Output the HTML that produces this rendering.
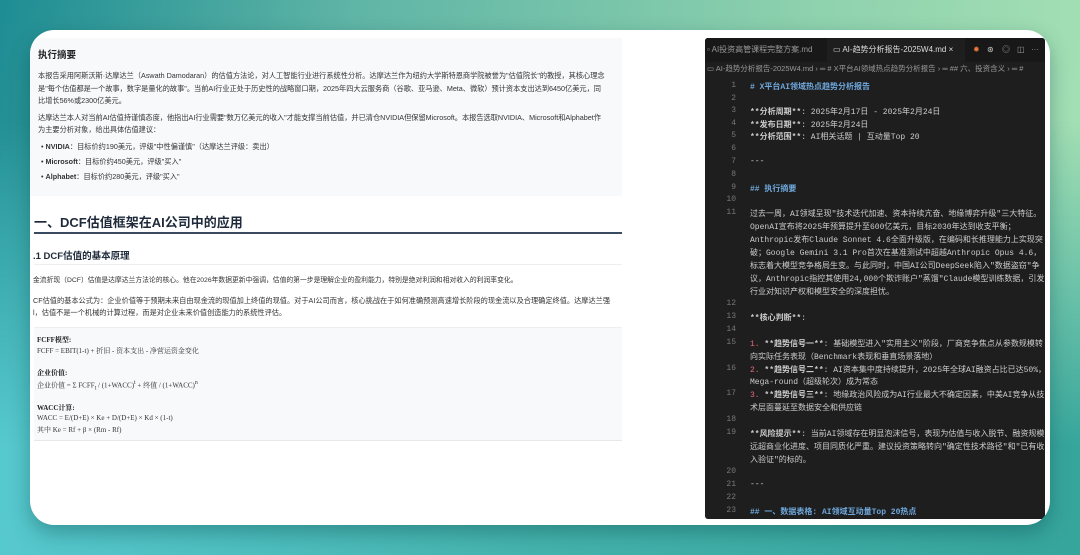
<!DOCTYPE html>
<html><head><meta charset="utf-8"><style>
*{margin:0;padding:0;box-sizing:border-box}
body{width:1080px;height:555px;overflow:hidden;position:relative;font-family:"Liberation Sans","Noto Sans CJK SC",sans-serif;
background:linear-gradient(100deg,#1e8d94 0%,#5fb5a6 30%,#8fd2ae 70%,#a9e3b6 100%);}
.bot{position:absolute;left:0;top:120px;width:1080px;height:435px;background:linear-gradient(90deg,#56c9cf 0%,#45b3ad 50%,#36a59c 100%);-webkit-mask-image:linear-gradient(to bottom,transparent 0%,black 75%);mask-image:linear-gradient(to bottom,transparent 0%,black 75%)}
.card{position:absolute;left:30px;top:30px;width:1020px;height:495px;background:#fff;border-radius:24px;overflow:hidden;box-shadow:0 8px 20px rgba(0,60,60,.35)}
.sum{position:absolute;left:0;top:8px;width:592px;height:158px;background:#f7f9fb}
.l{position:absolute;color:#333;font-size:7.2px;white-space:nowrap}
.h{font-weight:bold;color:#222}
.ed{position:absolute;left:675px;top:8px;width:340px;height:481px;background:#1e1e1f;border-radius:3px;overflow:hidden;font-family:"Liberation Mono","Noto Sans CJK SC",monospace}
.tabs{position:absolute;left:0;top:0;width:340px;height:24px;background:#181818}
.tab{position:absolute;top:0;height:24px;line-height:24px;font-size:8px;color:#999;font-family:"Liberation Sans","Noto Sans CJK SC",sans-serif;white-space:nowrap}
.bc{position:absolute;left:0;top:24px;height:14px;line-height:14px;font-size:7.5px;color:#999;font-family:"Liberation Sans","Noto Sans CJK SC",sans-serif;white-space:nowrap;padding-left:2px}
.n{position:absolute;left:0;width:31px;text-align:right;font-size:8px;color:#777}
.c{position:absolute;left:45px;font-size:8px;color:#ccc;white-space:nowrap}
.b{color:#6fa8dc;font-weight:bold}
.r{color:#e06c75}
</style></head><body>
<div class="bot"></div>
<div class="card">
<div class="sum"></div>
<div class="l h" style="left:8px;top:17px;font-size:9.5px">执行摘要</div>
<div class="l" style="left:8px;top:41px">本报告采用阿斯沃斯·达摩达兰（Aswath Damodaran）的估值方法论，对人工智能行业进行系统性分析。达摩达兰作为纽约大学斯特恩商学院被誉为"估值院长"的教授，其核心理念</div>
<div class="l" style="left:8px;top:54px">是"每个估值都是一个故事，数字是量化的故事"。当前AI行业正处于历史性的战略窗口期，2025年四大云服务商（谷歌、亚马逊、Meta、微软）预计资本支出达到6450亿美元，同</div>
<div class="l" style="left:8px;top:66px">比增长56%或2300亿美元。</div>
<div class="l" style="left:8px;top:83px">达摩达兰本人对当前AI估值持谨慎态度，他指出AI行业需要"数万亿美元的收入"才能支撑当前估值，并已清仓NVIDIA但保留Microsoft。本报告选取NVIDIA、Microsoft和Alphabet作</div>
<div class="l" style="left:8px;top:95px">为主要分析对象，给出具体估值建议：</div>
<div class="l" style="left:11px;top:112px">• <b>NVIDIA</b>：目标价约190美元，评级"中性偏谨慎"（达摩达兰评级：卖出）</div>
<div class="l" style="left:11px;top:127px">• <b>Microsoft</b>：目标价约450美元，评级"买入"</div>
<div class="l" style="left:11px;top:142px">• <b>Alphabet</b>：目标价约280美元，评级"买入"</div>
<div class="l h" style="left:4px;top:182px;font-size:13px;color:#1e2a3a">一、DCF估值框架在AI公司中的应用</div>
<div style="position:absolute;left:4px;top:202px;width:588px;height:1.5px;background:#3a4a60"></div>
<div class="l h" style="left:3px;top:218px;font-size:9.5px;color:#1e2a3a">.1 DCF估值的基本原理</div>
<div style="position:absolute;left:4px;top:234px;width:588px;height:1px;background:#eee"></div>
<div class="l" style="left:3px;top:244px;font-size:6.8px">金流折现（DCF）估值是达摩达兰方法论的核心。他在2026年数据更新中强调，估值的第一步是理解企业的盈利能力，特别是绝对利润和相对收入的利润率变化。</div>
<div class="l" style="left:3px;top:266px">CF估值的基本公式为：企业价值等于预期未来自由现金流的现值加上终值的现值。对于AI公司而言，核心挑战在于如何准确预测高速增长阶段的现金流以及合理确定终值。达摩达兰强</div>
<div class="l" style="left:3px;top:278px">l，估值不是一个机械的计算过程，而是对企业未来价值创造能力的系统性评估。</div>
<div style="position:absolute;left:4px;top:297px;width:588px;height:114px;background:#f8f9fb;border-top:1px solid #eee;border-bottom:1px solid #e8e8e8"></div>
<div class="l h" style="left:7px;top:305px;font-family:'Liberation Serif','Noto Serif CJK SC',serif;font-size:7px">FCFF模型:</div>
<div class="l" style="left:7px;top:316px;font-family:'Liberation Serif','Noto Serif CJK SC',serif;font-size:7px">FCFF = EBIT(1-t) + 折旧 - 资本支出 - 净营运资金变化</div>
<div class="l h" style="left:7px;top:338px;font-family:'Liberation Serif','Noto Serif CJK SC',serif;font-size:7px">企业价值:</div>
<div class="l" style="left:7px;top:350px;font-family:'Liberation Serif','Noto Serif CJK SC',serif;font-size:7px">企业价值 = Σ FCFF<sub>t</sub> / (1+WACC)<sup>t</sup> + 终值 / (1+WACC)<sup>n</sup></div>
<div class="l h" style="left:7px;top:373px;font-family:'Liberation Serif','Noto Serif CJK SC',serif;font-size:7px">WACC计算:</div>
<div class="l" style="left:7px;top:384px;font-family:'Liberation Serif','Noto Serif CJK SC',serif;font-size:7px">WACC = E/(D+E) × Ke + D/(D+E) × Kd × (1-t)</div>
<div class="l" style="left:7px;top:395px;font-family:'Liberation Serif','Noto Serif CJK SC',serif;font-size:7px">其中 Ke = Rf + β × (Rm - Rf)</div>

<div class="ed">
<div class="tabs"></div>
<div class="tab" style="left:0;width:118px;padding-left:2px;background:#181818">▫ AI投资高管课程完整方案.md</div>
<div class="tab" style="left:122px;width:138px;background:#1e1e1f;color:#ddd;padding-left:6px">▭ AI-趋势分析报告-2025W4.md ×</div>
<div class="tab" style="left:268px;color:#e8763a">✹</div>
<div class="tab" style="left:282px;color:#ccc">⊛</div>
<div class="tab" style="left:297px">◎</div>
<div class="tab" style="left:312px">◫</div>
<div class="tab" style="left:326px">···</div>
<div class="bc">▭ AI-趋势分析报告-2025W4.md › ═ # X平台AI领域热点趋势分析报告 › ═ ## 六、投资含义 › ═ #</div>
<div class="n" style="top:43px">1</div><div class="c b" style="top:43px"># X平台AI领域热点趋势分析报告</div>
<div class="n" style="top:56px">2</div>
<div class="n" style="top:68px">3</div><div class="c" style="top:68px"><b>**分析周期**</b>: 2025年2月17日 - 2025年2月24日</div>
<div class="n" style="top:81px">4</div><div class="c" style="top:81px"><b>**发布日期**</b>: 2025年2月24日</div>
<div class="n" style="top:93px">5</div><div class="c" style="top:93px"><b>**分析范围**</b>: AI相关话题 | 互动量Top 20</div>
<div class="n" style="top:106px">6</div>
<div class="n" style="top:119px">7</div><div class="c" style="top:119px">---</div>
<div class="n" style="top:132px">8</div>
<div class="n" style="top:145px">9</div><div class="c b" style="top:145px">## 执行摘要</div>
<div class="n" style="top:157px">10</div>
<div class="n" style="top:170px">11</div>
<div class="c" style="top:170px">过去一周，AI领域呈现"技术迭代加速、资本持续亢奋、地缘博弈升级"三大特征。</div>
<div class="c" style="top:183px">OpenAI宣布将2025年预算提升至600亿美元，目标2030年达到收支平衡；</div>
<div class="c" style="top:196px">Anthropic发布Claude Sonnet 4.6全面升级版，在编码和长推理能力上实现突</div>
<div class="c" style="top:209px">破；Google Gemini 3.1 Pro首次在基准测试中超越Anthropic Opus 4.6，</div>
<div class="c" style="top:222px">标志着大模型竞争格局生变。与此同时，中国AI公司DeepSeek陷入"数据盗窃"争</div>
<div class="c" style="top:235px">议，Anthropic指控其使用24,000个欺诈账户"蒸馏"Claude模型训练数据，引发</div>
<div class="c" style="top:248px">行业对知识产权和模型安全的深度担忧。</div>
<div class="n" style="top:261px">12</div>
<div class="n" style="top:274px">13</div><div class="c" style="top:274px"><b>**核心判断**</b>:</div>
<div class="n" style="top:287px">14</div>
<div class="n" style="top:300px">15</div><div class="c" style="top:300px"><span class="r">1.</span> <b>**趋势信号一**</b>: 基础模型进入"实用主义"阶段，厂商竞争焦点从参数规模转</div>
<div class="c" style="top:313px">向实际任务表现（Benchmark表现和垂直场景落地）</div>
<div class="n" style="top:326px">16</div><div class="c" style="top:326px"><span class="r">2.</span> <b>**趋势信号二**</b>: AI资本集中度持续提升，2025年全球AI融资占比已达50%，</div>
<div class="c" style="top:338px">Mega-round（超级轮次）成为常态</div>
<div class="n" style="top:351px">17</div><div class="c" style="top:351px"><span class="r">3.</span> <b>**趋势信号三**</b>: 地缘政治风险成为AI行业最大不确定因素，中美AI竞争从技</div>
<div class="c" style="top:364px">术层面蔓延至数据安全和供应链</div>
<div class="n" style="top:377px">18</div>
<div class="n" style="top:390px">19</div><div class="c" style="top:390px"><b>**风险提示**</b>: 当前AI领域存在明显泡沫信号，表现为估值与收入脱节、融资规模</div>
<div class="c" style="top:403px">远超商业化进度、项目同质化严重。建议投资策略转向"确定性技术路径"和"已有收</div>
<div class="c" style="top:416px">入验证"的标的。</div>
<div class="n" style="top:429px">20</div>
<div class="n" style="top:442px">21</div><div class="c" style="top:442px">---</div>
<div class="n" style="top:455px">22</div>
<div class="n" style="top:468px">23</div><div class="c b" style="top:468px">## 一、数据表格: AI领域互动量Top 20热点</div>
</div>
</div>
</body></html>
